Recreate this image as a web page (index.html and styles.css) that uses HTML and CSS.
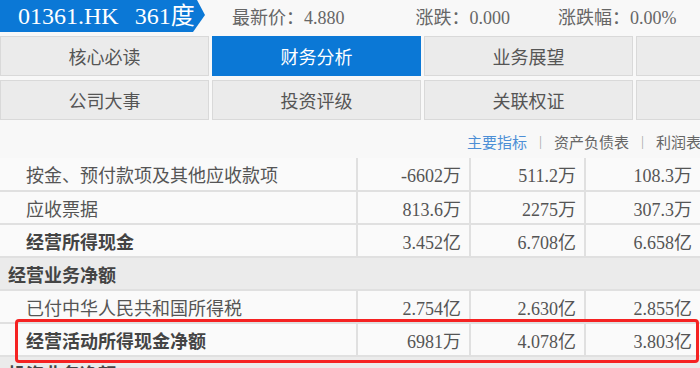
FILE: index.html
```html
<!DOCTYPE html>
<html lang="zh">
<head>
<meta charset="utf-8">
<link rel="stylesheet" href="styles.css">
</head>
<body>
<div class="page">
  <header class="quote">
    <div class="badge"><span class="code">01361.HK</span><span class="name">361度</span></div>
    <div class="stat s1">最新价：4.880</div>
    <div class="stat s2">涨跌：0.000</div>
    <div class="stat s3">涨跌幅：0.00%</div>
  </header>

  <nav class="tabs">
    <div class="tab">核心必读</div>
    <div class="tab active">财务分析</div>
    <div class="tab">业务展望</div>
    <div class="tab"></div>
    <div class="tab">公司大事</div>
    <div class="tab">投资评级</div>
    <div class="tab">关联权证</div>
    <div class="tab"></div>
  </nav>

  <div class="links">
    <span class="link on">主要指标</span><span class="sep">|</span><span class="link">资产负债表</span><span class="sep">|</span><span class="link">利润表</span>
  </div>

  <div class="table-wrap">
    <table class="fin">
      <colgroup>
        <col class="c-label"><col class="c-num"><col class="c-num2"><col class="c-num3">
      </colgroup>
      <tr class="first">
        <td class="lbl">按金、预付款项及其他应收款项</td><td>-6602万</td><td>511.2万</td><td>108.3万</td>
      </tr>
      <tr>
        <td class="lbl">应收票据</td><td>813.6万</td><td>2275万</td><td>307.3万</td>
      </tr>
      <tr class="bold">
        <td class="lbl">经营所得现金</td><td>3.452亿</td><td>6.708亿</td><td>6.658亿</td>
      </tr>
      <tr class="section">
        <td colspan="4">经营业务净额</td>
      </tr>
      <tr>
        <td class="lbl">已付中华人民共和国所得税</td><td>2.754亿</td><td>2.630亿</td><td>2.855亿</td>
      </tr>
      <tr class="bold">
        <td class="lbl">经营活动所得现金净额</td><td>6981万</td><td>4.078亿</td><td>3.803亿</td>
      </tr>
      <tr class="section">
        <td colspan="4">投资业务净额</td>
      </tr>
    </table>
    <div class="highlight"></div>
  </div>
</div>
</body>
</html>
```

FILE: styles.css
```css
* { box-sizing: border-box; }
html, body {
  margin: 0;
  padding: 0;
  background: #f8f8f8;
  overflow: hidden;
}
body {
  width: 700px;
  height: 368px;
  font-family: "Liberation Serif", "Noto Sans CJK SC", serif;
  color: #555;
}
.page { width: 700px; }

.quote {
  display: flex;
  align-items: center;
  height: 32px;
}
.badge {
  width: 205px;
  height: 32px;
  background: #0b78d6;
  clip-path: polygon(0 0, 197px 0, 205px 15px, 193px 32px, 0 32px);
  color: #fff;
  font-size: 24px;
  line-height: 32px;
  padding-left: 18px;
  display: flex;
  flex-shrink: 0;
}
.badge .name { margin-left: 16px; }
.stat {
  font-size: 18px;
  color: #666;
  white-space: nowrap;
}
.s1 { margin-left: 27px; }
.s2 { margin-left: 71px; }
.s3 { margin-left: 48px; }

.tabs {
  display: grid;
  grid-template-columns: repeat(4, 209px);
  grid-auto-rows: 40px;
  column-gap: 3px;
  row-gap: 4px;
  margin-top: 4px;
}
.tab {
  background: #ebebeb;
  border: 1px solid #d9d9d9;
  display: flex;
  align-items: center;
  justify-content: center;
  font-size: 18px;
  color: #555;
}
.tab.active {
  background: #0b78d6;
  border-color: #0b78d6;
  color: #fff;
}

.links {
  display: flex;
  align-items: center;
  justify-content: flex-start;
  padding-left: 467px;
  height: 20px;
  margin-top: 11px;
  font-size: 15px;
  white-space: nowrap;
  color: #666;
}
.link.on { color: #4d8fd6; }
.sep { color: #aaa; margin: 0 12px; }

.table-wrap {
  position: relative;
  margin-top: 7px;
  width: 700px;
}
.fin {
  border-collapse: collapse;
  width: 700px;
  table-layout: fixed;
  font-size: 18px;
}
.c-label { width: 357px; }
.c-num { width: 113px; }
.c-num2 { width: 115px; }
.c-num3 { width: 115px; }
.fin td {
  height: 33px;
  padding: 0 8px 0 0;
  text-align: right;
  border-top: 2px solid #e0e0e0;
  border-left: 2px solid #e0e0e0;
  white-space: nowrap;
  background: #fafafa;
}
.fin tr.first td { border-top: none; }
.fin td.lbl {
  text-align: left;
  padding-left: 26px;
  border-left: none;
}
.fin tr.bold td { color: #555; }
.fin tr.bold td.lbl { font-weight: bold; color: #444; }
.fin tr.section td {
  background: #ebebeb;
  text-align: left;
  padding-left: 8px;
  font-weight: bold;
  color: #444;
  border-left: none;
}

.highlight {
  position: absolute;
  left: 15px;
  top: 161px;
  width: 684px;
  height: 44px;
  border: 3px solid #f52222;
  border-radius: 4px;
  pointer-events: none;
}
```
